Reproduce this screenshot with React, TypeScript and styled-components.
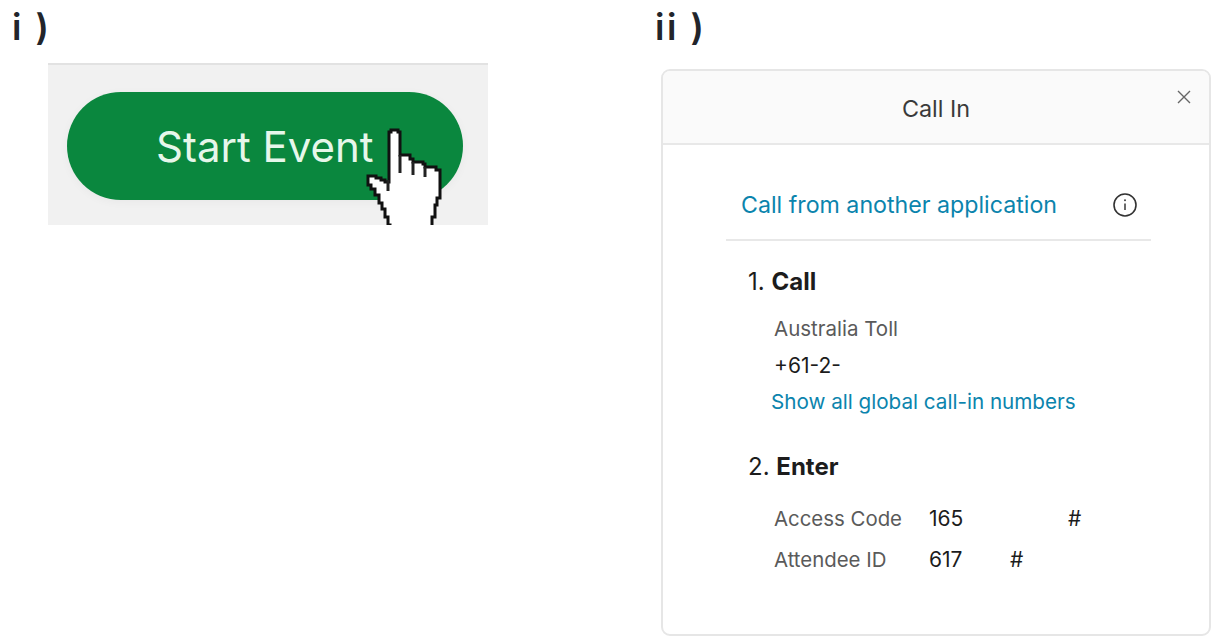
import React from "react";
import styled, { createGlobalStyle } from "styled-components";

const Global = createGlobalStyle`
  html, body { margin: 0; padding: 0; background: #fff; }
  body { font-family: Inter, "Liberation Sans", sans-serif; width: 1230px; height: 642px; overflow: hidden; }
`;
const Page = styled.div`
  display: flex;
  width: 1230px;
  height: 642px;
`;
const LeftColumn = styled.section`
  width: 655px;
  flex: none;
  padding-left: 12px;
  box-sizing: border-box;
`;
const RightColumn = styled.section`
  flex: 1;
`;
const Label = styled.h2`
  margin: 0;
  height: 63px;
  padding-top: 5px;
  box-sizing: border-box;
  font-size: 36px;
  line-height: 44px;
  font-weight: 600;
  letter-spacing: 2.5px;
  color: #22252b;
`;
const ButtonCard = styled.div`
  position: relative;
  overflow: hidden;
  width: 440px;
  height: 162px;
  margin-left: 36px;
  padding: 27px 25px 0 19px;
  box-sizing: border-box;
  background: #f1f1f1;
  border-top: 2px solid #e2e2e2;
`;
const StartButton = styled.div`
  height: 108px;
  border-radius: 54px;
  background: #0a873e;
  color: #e6f7ea;
  font-size: 42px;
  line-height: 110px;
  padding-left: 89px;
  box-shadow: 0 2px 10px rgba(0,0,0,0.04);
`;
const Cursor = styled.svg`
  position: absolute;
  left: 312px;
  top: 60px;
  filter: blur(0.5px);
`;
const Panel = styled.div`
  width: 550px;
  height: 567px;
  margin: 6px 0 0 6px;
  box-sizing: border-box;
  border: 2px solid #e6e6e6;
  border-radius: 9px;
  overflow: hidden;
  position: relative;
`;
const PanelHeader = styled.header`
  height: 74px;
  box-sizing: border-box;
  background: #fafafa;
  border-bottom: 2px solid #e8e8e8;
  text-align: center;
  font-size: 23.4px;
  line-height: 75px;
  color: #3a3a3a;
`;
const Close = styled.svg`
  position: absolute;
  right: 18px;
  top: 19px;
`;
const PanelBody = styled.div`
  padding: 0 58px 0 63px;
`;
const MethodRow = styled.div`
  display: flex;
  align-items: center;
  justify-content: space-between;
  height: 96px;
  box-sizing: border-box;
  padding: 26px 13px 0 15px;
  border-bottom: 2px solid #e8e8e8;
  color: #0b84ad;
  font-size: 23.2px;
`;
const InfoIcon = styled.svg`
  flex: none;
`;
const StepTitle = styled.h3<{ $top: number }>`
  margin: ${(p) => p.$top}px 0 0 22px;
  font-size: 24px;
  line-height: 30px;
  font-weight: 400;
  color: #1c1c1c;
  b { font-weight: 700; }
`;
const Muted = styled.div`
  margin: 20px 0 0 48px;
  font-size: 20.5px;
  line-height: 24px;
  color: #5a5a5a;
`;
const Dark = styled.div`
  margin: 13px 0 0 48px;
  font-size: 21px;
  line-height: 24px;
  color: #1c1c1c;
`;
const BlueLink = styled.div`
  margin: 12px 0 0 45px;
  font-size: 20.65px;
  line-height: 24px;
  color: #0b84ad;
`;
const CodeRow = styled.div<{ $top: number }>`
  display: flex;
  margin: ${(p) => p.$top}px 0 0 48px;
  font-size: 21px;
  line-height: 24px;
  color: #1c1c1c;
`;
const CodeLabel = styled.span`
  width: 155px;
  font-size: 20.4px;
  color: #5a5a5a;
`;
const CodeValue = styled.span<{ $width: number }>`
  width: ${(p) => p.$width}px;
`;

export default function App() {
  return (
    <Page>
      <Global />
      <LeftColumn>
        <Label>i )</Label>
        <ButtonCard>
          <StartButton>Start Event</StartButton>
          <Cursor width="86" height="110" viewBox="0 0 86 110" aria-hidden="true">
            <path
              d="M29 7 H31 V5 H38 V7 H40 V30 H50 V34 H53 V37 H63 V39 H65 V42 H76 V45 H80 V73 H77 V80 H75 V92 H72 V115 H30 V100 H28 V92 H25 V84 H22 V78 H19 V70 H15 V64 H11 V60 H8 V51 H16 V53 H21 V55 H25 V57 H29 Z"
              fill="#fff"
              stroke="#111"
              strokeWidth="3"
              strokeLinejoin="miter"
            />
            <path d="M40 30 V48 M53 37 V50 M65 42 V52 M28 55 V66" fill="none" stroke="#222" strokeWidth="3" />
          </Cursor>
        </ButtonCard>
      </LeftColumn>
      <RightColumn>
        <Label>ii )</Label>
        <Panel>
          <PanelHeader>Call In</PanelHeader>
          <Close width="14" height="14" viewBox="0 0 14 14" aria-hidden="true">
            <path d="M1 1 L13 13 M13 1 L1 13" stroke="#666" strokeWidth="1.4" fill="none" />
          </Close>
          <PanelBody>
            <MethodRow>
              Call from another application
              <InfoIcon width="26" height="26" viewBox="0 0 26 26" aria-hidden="true">
                <circle cx="13" cy="13" r="11" fill="none" stroke="#333" strokeWidth="1.6" />
                <path d="M13 11.5 V18" stroke="#444" strokeWidth="1.6" />
                <circle cx="13" cy="8.2" r="1" fill="#444" />
              </InfoIcon>
            </MethodRow>
            <StepTitle $top={26}>1. <b>Call</b></StepTitle>
            <Muted>Australia Toll</Muted>
            <Dark>+61-2-</Dark>
            <BlueLink>Show all global call-in numbers</BlueLink>
            <StepTitle $top={38}>2. <b>Enter</b></StepTitle>
            <CodeRow $top={25}>
              <CodeLabel>Access Code</CodeLabel>
              <CodeValue $width={139}>165</CodeValue>
              <span>#</span>
            </CodeRow>
            <CodeRow $top={17}>
              <CodeLabel>Attendee ID</CodeLabel>
              <CodeValue $width={81}>617</CodeValue>
              <span>#</span>
            </CodeRow>
          </PanelBody>
        </Panel>
      </RightColumn>
    </Page>
  );
}
